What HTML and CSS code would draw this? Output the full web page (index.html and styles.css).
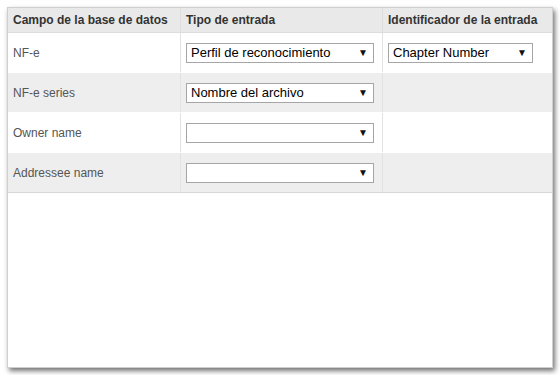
FILE: index.html
```html
<!DOCTYPE html>
<html lang="es">
<head>
  <meta charset="UTF-8" />
  <title>Mapeo de campos</title>
  <link rel="stylesheet" href="styles.css">
</head>
<body>
  <div class="panel">
    <table class="mapping">
      <thead>
        <tr>
          <th class="col-field">Campo de la base de datos</th>
          <th class="col-type">Tipo de entrada</th>
          <th class="col-id">Identificador de la entrada</th>
        </tr>
      </thead>
      <tbody>
        <tr>
          <td>NF-e</td>
          <td><div class="select wide"><span>Perfil de reconocimiento</span><i class="arrow">▼</i></div></td>
          <td><div class="select narrow"><span>Chapter Number</span><i class="arrow">▼</i></div></td>
        </tr>
        <tr class="alt">
          <td>NF-e series</td>
          <td><div class="select wide"><span>Nombre del archivo</span><i class="arrow">▼</i></div></td>
          <td></td>
        </tr>
        <tr>
          <td>Owner name</td>
          <td><div class="select wide"><span></span><i class="arrow">▼</i></div></td>
          <td></td>
        </tr>
        <tr class="alt">
          <td>Addressee name</td>
          <td><div class="select wide"><span></span><i class="arrow">▼</i></div></td>
          <td></td>
        </tr>
      </tbody>
    </table>
  </div>
</body>
</html>
```

FILE: styles.css
```css
body {
  margin: 0;
  padding: 7px;
  background: #ffffff;
  font-family: 'Liberation Sans', Arial, sans-serif;
}

.panel {
  width: 544px;
  height: 359px;
  background: #ffffff;
  border: 1px solid #cfcfcf;
  box-shadow: 2px 3px 5px rgba(0, 0, 0, 0.55);
}

.mapping {
  width: 100%;
  border-collapse: collapse;
}

.mapping th {
  height: 24px;
  padding: 0 5px;
  background: #e9e9e9;
  color: #333333;
  font-size: 12px;
  font-weight: bold;
  text-align: left;
  border-left: 1px solid #dddddd;
  border-bottom: 1px solid #dddddd;
}

.mapping td {
  height: 39px;
  padding: 0 5px;
  color: #555555;
  font-size: 12px;
  border-left: 1px solid #e2e2e2;
  border-bottom: 1px solid #ffffff;
}

.mapping th:first-child,
.mapping td:first-child {
  border-left: none;
}

.mapping tr:last-child td {
  border-bottom: 1px solid #d8d8d8;
}

.col-field { width: 162px; }
.col-type { width: 191px; }

.alt td {
  background: #eeeeee;
}

.select {
  display: flex;
  align-items: center;
  justify-content: space-between;
  height: 18px;
  padding: 0 4px;
  border: 1px solid #a6a6a6;
  background: #ffffff;
  color: #000000;
  font-size: 13px;
}

.select.wide { width: 178px; }
.select.narrow { width: 135px; }

.arrow {
  font-style: normal;
  font-size: 10px;
  color: #111111;
  margin-right: 1px;
}
```
